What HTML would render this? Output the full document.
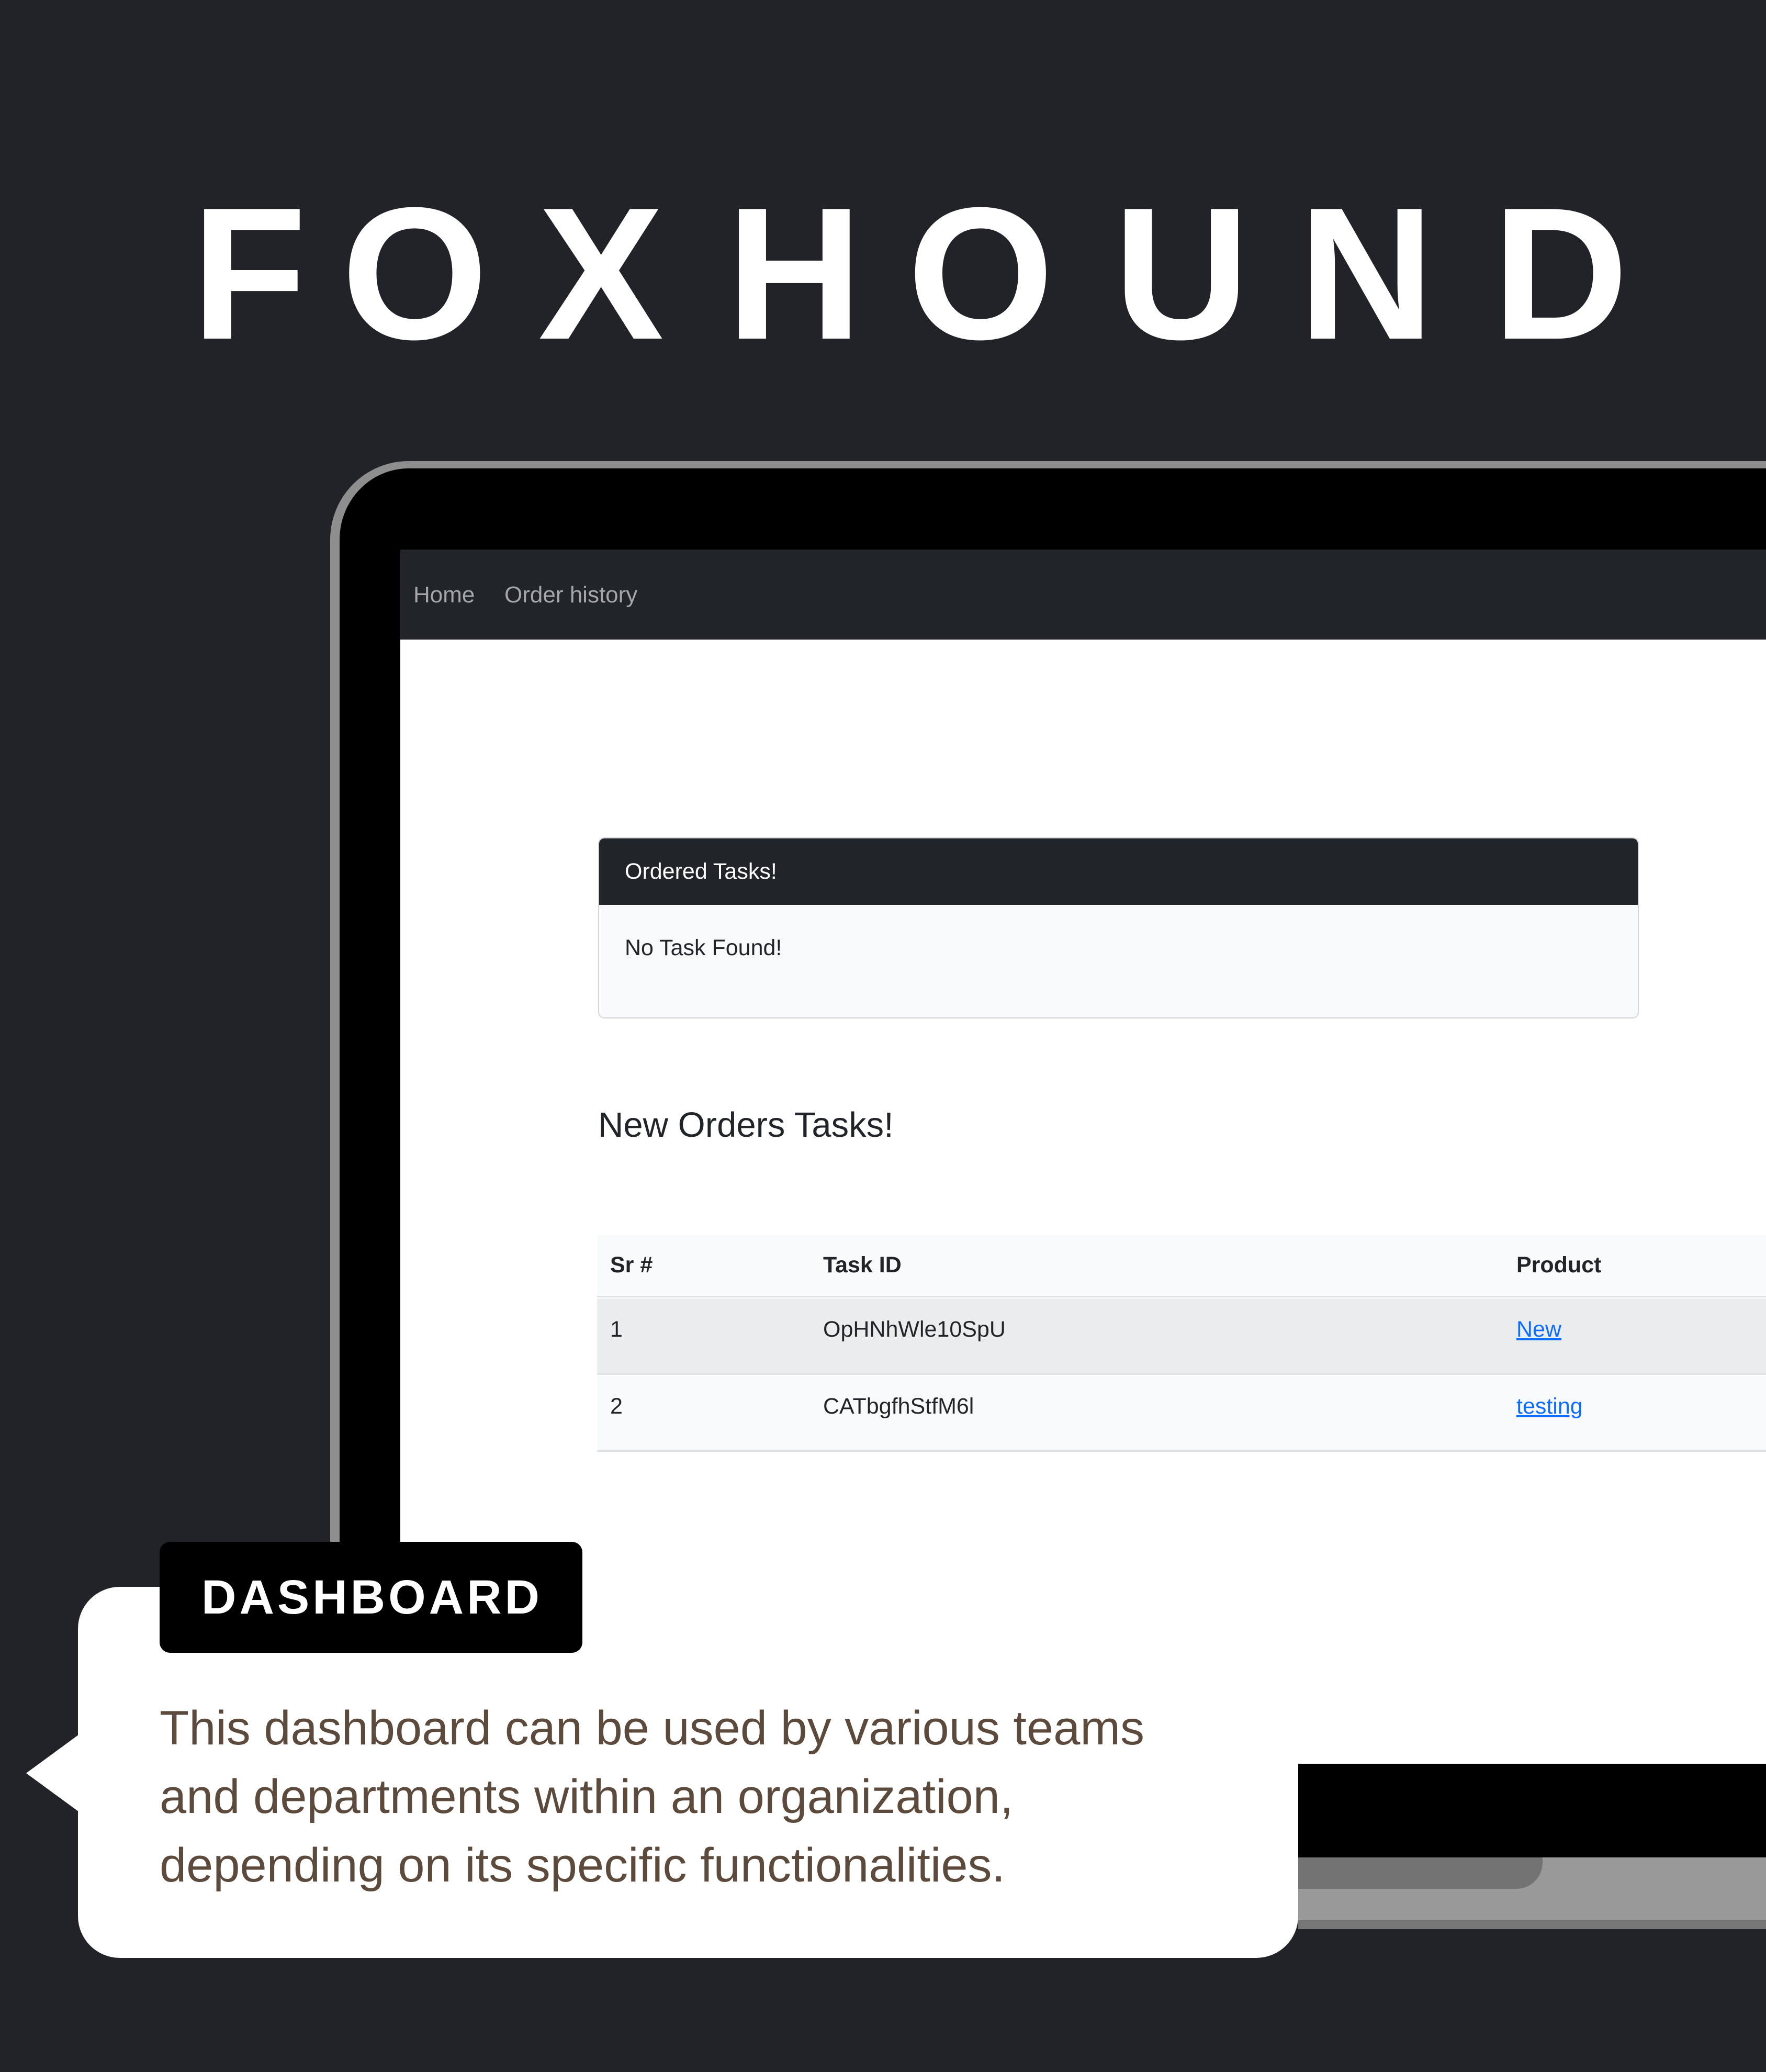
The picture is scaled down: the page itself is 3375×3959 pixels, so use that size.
<!DOCTYPE html>
<html><head><meta charset="utf-8"><style>
*{margin:0;padding:0;box-sizing:border-box}
html,body{width:3375px;height:3959px;overflow:hidden;background:#212329;font-family:"Liberation Sans",sans-serif}
.abs{position:absolute}
.L{position:absolute;top:338px;height:370px;line-height:370px;font-size:360px;font-weight:bold;color:#fff;text-align:center}
.nav a{color:#a4a6a9;text-decoration:none;font-size:44px;position:absolute;top:1112px}
</style></head><body>
<div class="L" style="left:366px;width:177px">F</div>
<div class="L" style="left:651px;width:283px">O</div>
<div class="L" style="left:1022px;width:253px">X</div>
<div class="L" style="left:1388px;width:220px">H</div>
<div class="L" style="left:1734px;width:278px">O</div>
<div class="L" style="left:2128px;width:220px">U</div>
<div class="L" style="left:2481px;width:235px">N</div>
<div class="L" style="left:2852px;width:240px">D</div>

<div class="abs" style="left:631px;top:881px;width:2944px;height:2668px;background:#000;border-top:14px solid #8e8e8e;border-left:18px solid #8e8e8e;border-top-left-radius:150px"></div>
<div class="abs" style="left:765px;top:1050px;width:2610px;height:2320px;background:#fff"></div>
<div class="abs" style="left:765px;top:1050px;width:2610px;height:172px;background:#212529"></div>
<div class="nav"><a style="left:790px">Home</a><a style="left:964px">Order history</a></div>
<div class="abs" style="left:2481px;top:3549px;width:894px;height:120px;background:#999"></div>
<div class="abs" style="left:2400px;top:3549px;width:548px;height:60px;background:#737373;border-bottom-right-radius:50px"></div>
<div class="abs" style="left:2481px;top:3669px;width:894px;height:17px;background:#777"></div>

<div class="abs" style="left:1143px;top:1600px;width:1989px;height:346px;background:#f8f9fa;border:2px solid #d3d5d8;border-radius:12px;overflow:hidden">
 <div style="height:127px;background:#212529;color:#fff;font-size:43px;line-height:127px;padding-left:49px">Ordered Tasks!</div>
 <div style="font-size:43px;color:#212529;padding:58px 0 0 49px">No Task Found!</div>
</div>
<div class="abs" style="left:1143px;top:2110px;font-size:67px;color:#212529;line-height:80px">New Orders Tasks!</div>

<div class="abs" style="left:1141px;top:2360px;width:2234px;height:119px;background:#f8f9fa;border-bottom:3px solid #dee2e6"></div>
<div class="abs" style="left:1141px;top:2481px;width:2234px;height:146px;background:#ebeced;border-bottom:3px solid #dee2e6"></div>
<div class="abs" style="left:1141px;top:2628px;width:2234px;height:146px;background:#f8f9fa;border-bottom:3px solid #dee2e6"></div>
<div class="abs" style="left:1166px;top:2393px;font-size:43px;font-weight:bold;color:#212529">Sr #</div>
<div class="abs" style="left:1573px;top:2393px;font-size:43px;font-weight:bold;color:#212529">Task ID</div>
<div class="abs" style="left:2898px;top:2393px;font-size:43px;font-weight:bold;color:#212529">Product</div>
<div class="abs" style="left:1166px;top:2516px;font-size:43px;color:#212529">1</div>
<div class="abs" style="left:1573px;top:2516px;font-size:43px;color:#212529">OpHNhWle10SpU</div>
<div class="abs" style="left:2898px;top:2516px;font-size:43px;color:#0d6efd;text-decoration:underline">New</div>
<div class="abs" style="left:1166px;top:2663px;font-size:43px;color:#212529">2</div>
<div class="abs" style="left:1573px;top:2663px;font-size:43px;color:#212529">CATbgfhStfM6l</div>
<div class="abs" style="left:2898px;top:2663px;font-size:43px;color:#0d6efd;text-decoration:underline">testing</div>

<div class="abs" style="left:149px;top:3032px;width:2332px;height:709px;background:#fff;border-radius:80px"></div>
<svg class="abs" style="left:45px;top:3310px" width="110" height="155"><polygon points="106,4 5,78 106,152" fill="#fff"/></svg>
<div class="abs" style="left:305px;top:2946px;width:808px;height:212px;background:#000;border-radius:20px;color:#fff;font-weight:bold;font-size:92px;line-height:212px;letter-spacing:6px;padding-left:80px;white-space:nowrap;overflow:hidden">DASHBOARD</div>
<div class="abs" style="left:305px;top:3237px;font-size:92px;line-height:131px;color:#5c4a3c;white-space:nowrap">This dashboard can be used by various teams<br>and departments within an organization,<br>depending on its specific functionalities.</div>
</body></html>
